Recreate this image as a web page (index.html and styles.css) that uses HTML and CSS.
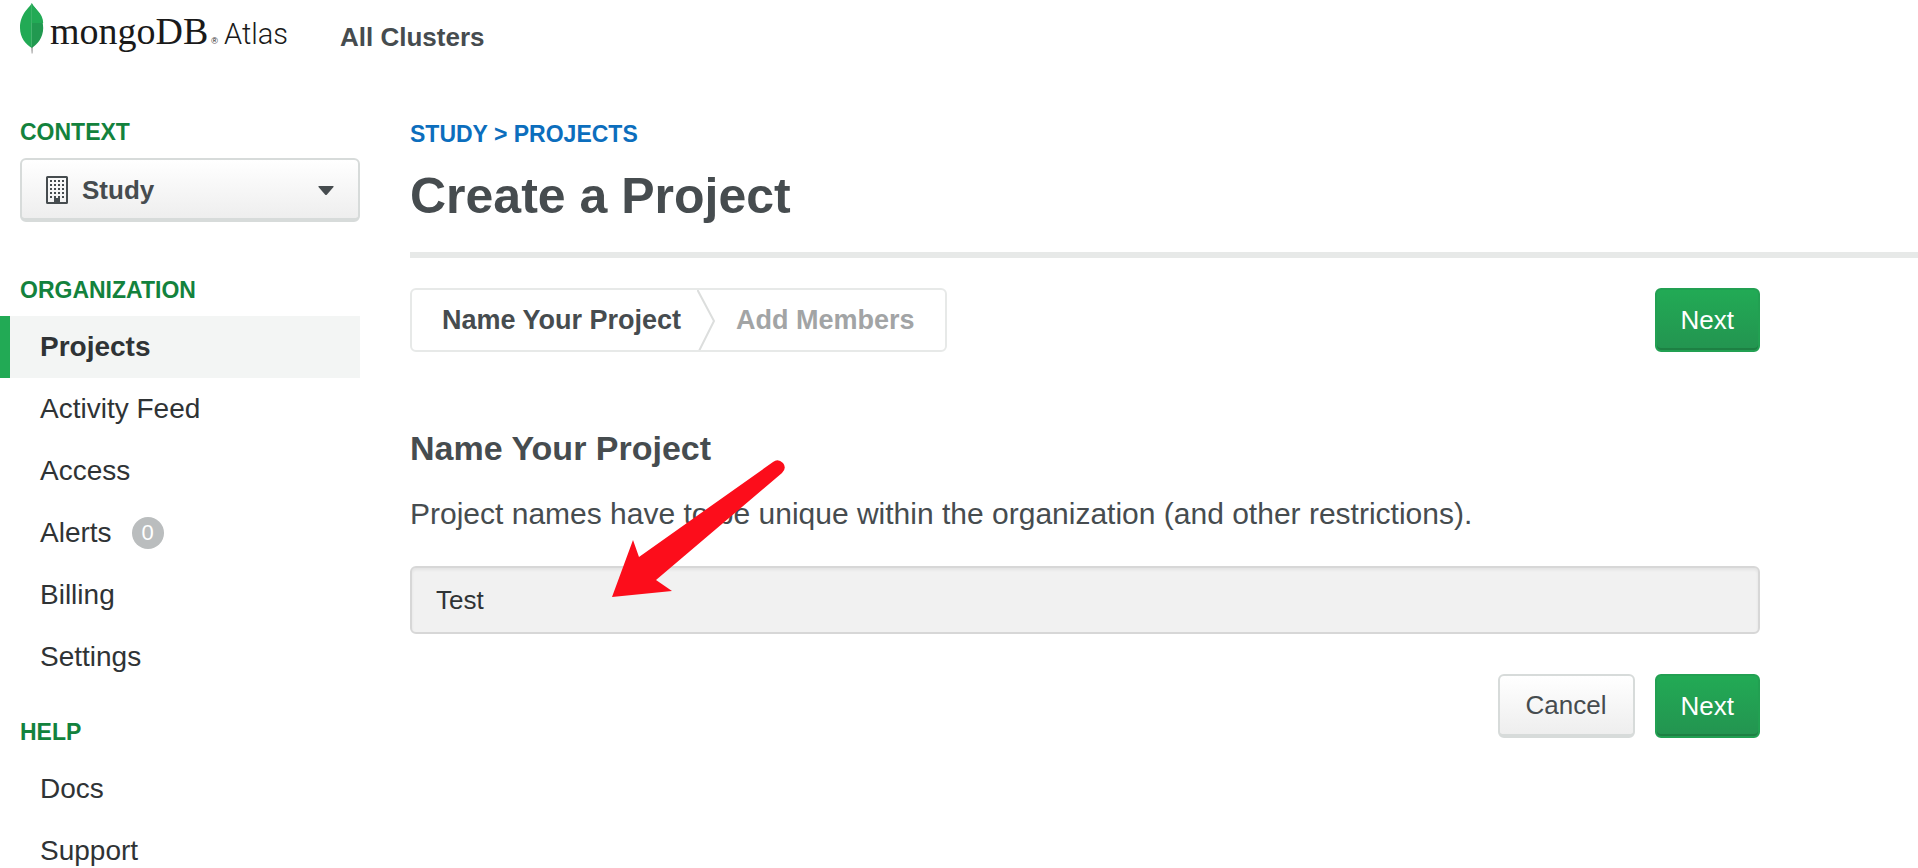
FILE: index.html
```html
<!DOCTYPE html>
<html lang="en">
<head>
<meta charset="utf-8">
<meta name="viewport" content="width=device-width, initial-scale=1">
<title>Create a Project | MongoDB Atlas</title>
<link rel="stylesheet" href="styles.css">
</head>
<body>
<header class="topbar">
  <a class="logo" href="#">
    <svg class="logo-leaf" viewBox="0 0 24 51" aria-hidden="true">
      <path fill="#a6a6a6" d="M11 43h2l-.4 7.500h-1z"/>
      <path fill="#22aa55" d="M11.800 0C10 4.500 0 10 0 25c0 10 6 16.500 11.800 20z"/>
      <path fill="#219950" d="M11.800 0c1.800 5 11.400 10 11.400 25 0 10-6 16.500-11.400 20z"/>
      <path fill="#22aa55" d="M11.800 0c1.800 5 11.400 10 11.400 20H11.800z"/>
    </svg>
    <span class="logo-name">mongoDB</span><span class="logo-mark">®</span><span class="logo-product">Atlas</span>
  </a>
  <nav><a class="topbar-link" href="#">All Clusters</a></nav>
</header>
<div class="layout">
  <aside class="sidebar">
    <label class="section-title" for="context">Context</label>
    <div class="context">
      <svg class="context-icon" viewBox="0 0 22 28" aria-hidden="true">
        <rect x="1" y="1" width="20" height="26" rx="0.500" fill="none" stroke="#464c4f" stroke-width="2"/>
        <path d="M4 5h14M4 9h14M4 13h14M4 17h14M4 21h14" stroke="#464c4f" stroke-width="2" stroke-dasharray="2 2"/>
        <path d="M8 22h6v5H8z" fill="#464c4f"/>
      </svg>
      <select class="context-select" id="context"><option>Study</option></select>
      <svg class="context-caret" viewBox="0 0 16 10" aria-hidden="true"><path d="M1 0h14q1 0 .5 1L9 8.500q-1 1-2 0L.5 1Q0 0 1 0z" fill="#464c4f"/></svg>
    </div>
    <nav>
      <h2 class="section-title">Organization</h2>
      <ul class="menu">
        <li><a class="menu-link menu-link-active" href="#">Projects</a></li>
        <li><a class="menu-link" href="#">Activity Feed</a></li>
        <li><a class="menu-link" href="#">Access</a></li>
        <li><a class="menu-link" href="#">Alerts <span class="badge">0</span></a></li>
        <li><a class="menu-link" href="#">Billing</a></li>
        <li><a class="menu-link" href="#">Settings</a></li>
      </ul>
      <h2 class="section-title section-title-help">Help</h2>
      <ul class="menu">
        <li><a class="menu-link" href="#">Docs</a></li>
        <li><a class="menu-link" href="#">Support</a></li>
      </ul>
    </nav>
  </aside>
  <main class="main">
    <a class="breadcrumb" href="#">Study &gt; Projects</a>
    <h1 class="page-title">Create a Project</h1>
    <form class="project-form">
      <div class="wizard-bar">
        <ol class="steps">
          <li class="step">Name Your Project</li>
          <li class="step step-next">
            <svg class="step-divider" viewBox="0 0 18 60" aria-hidden="true"><path d="M0 -1L17 31L2 61" fill="none" stroke="#dcdedd" stroke-width="2"/></svg>
            Add Members
          </li>
        </ol>
        <button class="button button-primary" type="button">Next</button>
      </div>
      <h2 class="form-title"><label for="project-name">Name Your Project</label></h2>
      <p class="form-note">Project names have to be unique within the organization (and other restrictions).</p>
      <div class="field">
        <input class="text-input" id="project-name" type="text" value="Test">
        <svg class="pointer" viewBox="0 0 176 140" aria-hidden="true"><path fill="#fc0d1b" d="M2 138L23 81l6 17L163 3q5-4 10 1 4 5-1 10L46 121l16 11z"/></svg>
      </div>
      <div class="actions">
        <button class="button button-default" type="button">Cancel</button>
        <button class="button button-primary" type="submit">Next</button>
      </div>
    </form>
  </main>
</div>
</body>
</html>
```
FILE: styles.css
```css
* {
  box-sizing: border-box;
}

body {
  margin: 0;
  background: #fff;
  color: #464c4f;
  font: 26px/32px "Liberation Sans", Arial, sans-serif;
}

a {
  color: inherit;
  text-decoration: none;
}

h1,
h2,
p,
ul,
ol {
  margin: 0;
  padding: 0;
}

ul,
ol {
  list-style: none;
}

.topbar {
  display: flex;
  align-items: flex-start;
  gap: 52px;
  height: 118px;
  padding-left: 20px;
}

.topbar-link {
  display: block;
  padding-top: 21px;
  font-weight: bold;
}

.logo {
  display: flex;
  align-items: baseline;
  color: #1a1a1a;
  line-height: 62px;
}

.logo-leaf {
  align-self: flex-start;
  width: 24px;
  height: 51px;
  margin: 3px 6px 0 0;
}

.logo-name {
  font-family: "Liberation Serif", "Times New Roman", serif;
  font-size: 38px;
}

.logo-mark {
  margin: 0 6px 0 3px;
  font-size: 9px;
}

.logo-product {
  font-family: Roboto, "Liberation Sans", sans-serif;
  font-size: 29px;
  font-weight: 300;
}

.layout {
  display: flex;
  gap: 50px;
}

.sidebar {
  flex: 0 0 360px;
}

.section-title {
  display: block;
  padding-left: 20px;
  color: #13823d;
  font-size: 23px;
  font-weight: bold;
  line-height: 28px;
  text-transform: uppercase;
}

.context {
  position: relative;
  margin: 12px 0 54px 20px;
}

.context-select {
  display: block;
  width: 100%;
  height: 64px;
  padding: 2px 60px 0 60px;
  border: 2px solid #d7dbda;
  border-bottom-width: 4px;
  border-radius: 6px;
  background: linear-gradient(#fff, #eee);
  color: #464c4f;
  font: bold 26px "Liberation Sans", Arial, sans-serif;
  appearance: none;
}

.context-icon {
  position: absolute;
  top: 18px;
  left: 26px;
  width: 22px;
  height: 28px;
}

.context-caret {
  position: absolute;
  top: 28px;
  right: 26px;
  width: 16px;
  height: 10px;
}

.menu {
  margin-top: 12px;
}

.section-title-help {
  margin-top: 30px;
}

.menu-link {
  display: flex;
  align-items: center;
  height: 62px;
  padding-left: 40px;
  color: #2f3335;
  font-size: 28px;
}

.menu-link-active {
  padding-left: 30px;
  border-left: 10px solid #22aa55;
  background: #f3f5f4;
  font-weight: bold;
}

.badge {
  width: 32px;
  height: 32px;
  margin-left: 20px;
  border-radius: 50%;
  background: #babdbe;
  color: #fff;
  font-size: 22px;
  text-align: center;
}

.main {
  flex: 1;
  padding-top: 2px;
}

.breadcrumb {
  display: block;
  color: #0c6ebd;
  font-size: 23px;
  font-weight: bold;
  line-height: 28px;
  text-transform: uppercase;
}

.page-title {
  padding: 18px 0 26px;
  border-bottom: 6px solid #e7e9e8;
  font-size: 50px;
  line-height: 60px;
}

.project-form {
  max-width: 1350px;
  padding-top: 30px;
}

.wizard-bar {
  display: flex;
  align-items: center;
  justify-content: space-between;
}

.steps {
  display: flex;
  height: 64px;
  padding: 0 30px;
  border: 2px solid #e7e9e8;
  border-radius: 6px;
  font-size: 27px;
  font-weight: bold;
}

.step {
  display: flex;
  align-items: center;
}

.step-next {
  color: #a2a4a5;
}

.step-divider {
  width: 18px;
  height: 60px;
  margin: 0 21px 0 16px;
}

.button {
  height: 64px;
  border: 2px solid;
  border-radius: 6px;
  font: 26px "Liberation Sans", Arial, sans-serif;
}

.button-primary {
  padding: 0 24px;
  border-color: #22a052;
  background: linear-gradient(#22aa55, #239450);
  box-shadow: inset 0 -2px #1d8043;
  color: #fff;
}

.button-default {
  padding: 0 26px;
  border-color: #d7dbda;
  border-bottom-width: 4px;
  background: linear-gradient(#fff, #eee);
  color: #464c4f;
}

.form-title {
  margin-top: 76px;
  font-size: 34px;
  line-height: 40px;
}

.form-note {
  margin-top: 28px;
  font-size: 30px;
  line-height: 36px;
}

.field {
  position: relative;
  margin-top: 34px;
}

.text-input {
  display: block;
  width: 100%;
  height: 68px;
  padding: 0 24px;
  border: 2px solid #d7d7d7;
  border-radius: 6px;
  background: #f1f1f1;
  box-shadow: inset 0 2px 3px rgba(0, 0, 0, 0.06);
  color: #2f3335;
  font: 26px "Liberation Sans", Arial, sans-serif;
}

.pointer {
  position: absolute;
  top: -107px;
  left: 200px;
  width: 176px;
  height: 140px;
  pointer-events: none;
}

.actions {
  display: flex;
  justify-content: flex-end;
  gap: 20px;
  margin-top: 40px;
}
```
